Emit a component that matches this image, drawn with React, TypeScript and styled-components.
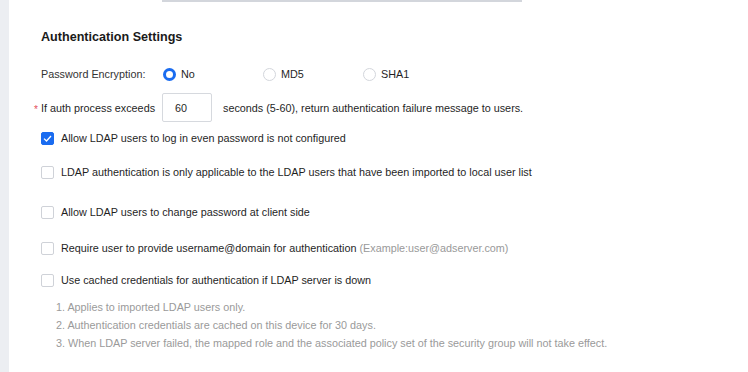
import styled, { createGlobalStyle } from 'styled-components';

const GlobalStyle = createGlobalStyle`
  html, body {
    margin: 0;
    padding: 0;
    background: #ffffff;
  }
  body {
    font-family: "Liberation Sans", Arial, sans-serif;
    font-size: 10.8px;
    color: #1f1f1f;
  }
`;

const checkboxOptions = [
  { label: 'Allow LDAP users to log in even password is not configured', checked: true, gap: 0 },
  { label: 'LDAP authentication is only applicable to the LDAP users that have been imported to local user list', checked: false, gap: 20 },
  { label: 'Allow LDAP users to change password at client side', checked: false, gap: 26 },
  { label: 'Require user to provide username@domain for authentication', hint: '(Example:user@adserver.com)', checked: false, gap: 22 },
  { label: 'Use cached credentials for authentication if LDAP server is down', checked: false, gap: 18 },
];

const notes = [
  '1. Applies to imported LDAP users only.',
  '2. Authentication credentials are cached on this device for 30 days.',
  '3. When LDAP server failed, the mapped role and the associated policy set of the security group will not take effect.',
];

const encryptions = ['No', 'MD5', 'SHA1'];

export default function App() {
  return (
    <>
      <GlobalStyle />
      <Page>
        <LeftRail />
        <Content>
          <TopEdge />
          <Title>Authentication Settings</Title>

          <FieldRow>
            <FieldLabel>Password Encryption:</FieldLabel>
            <RadioGroup>
              {encryptions.map((name, i) => (
                <RadioOption key={name}>
                  <RadioDot $checked={i === 0} />
                  {name}
                </RadioOption>
              ))}
            </RadioGroup>
          </FieldRow>

          <TimeoutRow>
            <Required>*</Required>
            <span>If auth process exceeds</span>
            <NumberBox>60</NumberBox>
            <span>seconds (5-60), return authentication failure message to users.</span>
          </TimeoutRow>

          <OptionList>
            {checkboxOptions.map((opt) => (
              <CheckRow key={opt.label} $gap={opt.gap}>
                <CheckBox $checked={opt.checked}>
                  {opt.checked && (
                    <svg width="9" height="7" viewBox="0 0 9 7">
                      <path d="M1 3.6 L3.5 6 L8 1" fill="none" stroke="#fff" strokeWidth="1.3" />
                    </svg>
                  )}
                </CheckBox>
                <span>
                  {opt.label}
                  {opt.hint && <Hint> {opt.hint}</Hint>}
                </span>
              </CheckRow>
            ))}
          </OptionList>

          <Notes>
            {notes.map((n) => (
              <Note key={n}>{n}</Note>
            ))}
          </Notes>
        </Content>
      </Page>
    </>
  );
}

const Page = styled.div`
  display: flex;
  width: 748px;
  height: 372px;
  overflow: hidden;
`;

const LeftRail = styled.div`
  width: 9px;
  flex-shrink: 0;
  background: #eceef2;
`;

const Content = styled.div`
  flex: 1;
  display: flex;
  flex-direction: column;
  padding-left: 32px;
`;

const TopEdge = styled.div`
  width: 360px;
  height: 2px;
  margin-left: 121px;
  background: #d3d6dc;
`;

const Title = styled.h2`
  margin: 27px 0 0;
  font-size: 12.6px;
  font-weight: 700;
  color: #1a1a1a;
  line-height: 16px;
`;

const FieldRow = styled.div`
  display: flex;
  align-items: center;
  margin-top: 21px;
  height: 16px;
`;

const FieldLabel = styled.span`
  width: 122px;
  color: #333;
`;

const RadioGroup = styled.div`
  display: flex;
`;

const RadioOption = styled.label`
  display: flex;
  align-items: center;
  gap: 5px;
  width: 100px;
`;

const RadioDot = styled.span<{ $checked: boolean }>`
  box-sizing: border-box;
  width: 13px;
  height: 13px;
  border-radius: 50%;
  background: #fff;
  border: ${(p) => (p.$checked ? '3.5px solid #1a6cf0' : '1px solid #d3d6dc')};
`;

const TimeoutRow = styled.div`
  position: relative;
  display: flex;
  align-items: center;
  margin-top: 11px;

  & > span:last-child {
    margin-left: 11px;
  }
`;

const Required = styled.span`
  position: absolute;
  left: -7px;
  top: 11px;
  color: #e34d59;
  font-size: 10px;
`;

const NumberBox = styled.div`
  box-sizing: border-box;
  width: 50px;
  height: 29px;
  margin-left: 7px;
  padding-left: 12px;
  display: flex;
  align-items: center;
  border: 1px solid #d6d9de;
  border-radius: 2px;
  color: #1f1f1f;
`;

const OptionList = styled.div`
  display: flex;
  flex-direction: column;
  margin-top: 9px;
`;

const CheckRow = styled.label<{ $gap: number }>`
  display: flex;
  align-items: center;
  gap: 7px;
  height: 14px;
  margin-top: ${(p) => p.$gap}px;
`;

const CheckBox = styled.span<{ $checked: boolean }>`
  box-sizing: border-box;
  width: 13px;
  height: 13px;
  border-radius: 2px;
  display: flex;
  align-items: center;
  justify-content: center;
  background: ${(p) => (p.$checked ? '#1a6cf0' : '#fff')};
  border: 1px solid ${(p) => (p.$checked ? '#1a6cf0' : '#cfd2d8')};
`;

const Hint = styled.span`
  color: #999;
`;

const Notes = styled.div`
  display: flex;
  flex-direction: column;
  gap: 4px;
  margin-top: 13px;
  padding-left: 15px;
`;

const Note = styled.div`
  color: #9a9a9a;
  line-height: 14px;
`;
